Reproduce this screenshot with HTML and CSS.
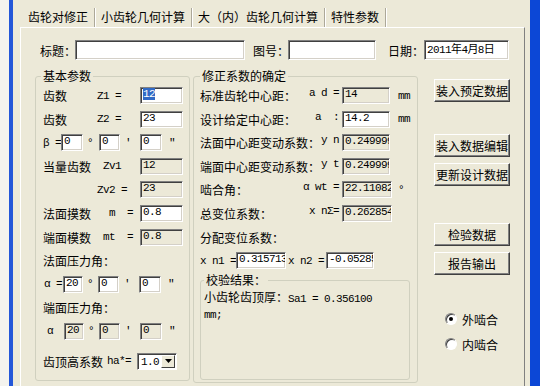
FILE: index.html
```html
<!DOCTYPE html>
<html lang="zh-CN">
<head>
    <meta charset="UTF-8">
    <title>齿轮对修正</title>
    <link rel="stylesheet" href="styles.css">
</head>
<body>
    <div class="window">
        <div class="tabs">
            <span class="tab active">齿轮对修正</span>
            <span class="tab">小齿轮几何计算</span>
            <span class="tab">大（内）齿轮几何计算</span>
            <span class="tab">特性参数</span>
        </div>

        <div class="panel">
            <div class="head">
                <span class="lbl-title">标题：</span><span class="edit big e-title"></span>
                <span class="lbl-no">图号：</span><span class="edit big e-no"></span>
                <span class="lbl-date">日期：</span><span class="edit big e-date">2011年4月8日</span>
            </div>

            <div class="main">
                <fieldset class="group basic">
                    <legend>基本参数</legend>
                    <div class="rows">
                        <div class="row"><span class="c1">齿数</span><span class="c2 en">Z1 =</span><span class="edit w43"><span class="sel">12</span></span></div>
                        <div class="row"><span class="c1">齿数</span><span class="c2 en">Z2 =</span><span class="edit w43">23</span></div>
                        <div class="row">
                            <span class="en pre-b">β =</span><span class="edit w22">0</span>
                            <span class="mark m-deg en">°</span><span class="edit w21">0</span>
                            <span class="mark m-min en">′</span><span class="edit w22">0</span>
                            <span class="mark m-sec en">″</span>
                        </div>
                        <div class="row"><span class="c1">当量齿数</span><span class="c2 en"> Zv1</span><span class="edit ro w43">12</span></div>
                        <div class="row"><span class="c1"></span><span class="c2 en">Zv2 =</span><span class="edit ro w43">23</span></div>
                        <div class="row"><span class="c1">法面摸数</span><span class="c2 en">  m  =</span><span class="edit w43">0.8</span></div>
                        <div class="row"><span class="c1">端面模数</span><span class="c2 en"> mt  =</span><span class="edit ro w43">0.8</span></div>
                        <div class="row">法面压力角：</div>
                        <div class="row">
                            <span class="en pre-a">α =</span><span class="edit w20">20</span>
                            <span class="mark m-deg2 en">°</span><span class="edit w21">0</span>
                            <span class="mark m-min en">′</span><span class="edit w22">0</span>
                            <span class="mark m-sec en">″</span>
                        </div>
                        <div class="row">端面压力角：</div>
                        <div class="row">
                            <span class="en pre-a2">α</span><span class="edit ro w20">20</span>
                            <span class="mark m-deg2 en">°</span><span class="edit ro w21">0</span>
                            <span class="mark m-min en">′</span><span class="edit ro w22">0</span>
                            <span class="mark m-sec en">″</span>
                        </div>
                        <div class="row last">
                            <span>齿顶高系数</span><span class="en ha">ha*=</span>
                            <span class="combo"><span class="combo-val">1.0</span><span class="drop"><svg width="7" height="4" viewBox="0 0 7 4"><polygon points="0,0 7,0 3.5,4" fill="#000"/></svg></span></span>
                        </div>
                    </div>
                </fieldset>

                <fieldset class="group fix">
                    <legend>修正系数的确定</legend>
                    <div class="rows">
                        <div class="row"><span class="rl"><span>标准齿轮中心距：</span><span class="en">a d =</span></span><span class="edit ro w48">14</span><span class="unit en">mm</span></div>
                        <div class="row"><span class="rl"><span>设计给定中心距：</span><span class="en">a  :</span></span><span class="edit w48">14.2</span><span class="unit en">mm</span></div>
                        <div class="row"><span class="rl"><span>法面中心距变动系数：</span><span class="en">y n</span></span><span class="edit ro w48">0.249999</span></div>
                        <div class="row"><span class="rl"><span>端面中心距变动系数：</span><span class="en">y t</span></span><span class="edit ro w48">0.249999</span></div>
                        <div class="row"><span class="rl"><span>啮合角：</span><span class="en">α wt =</span></span><span class="edit ro w50">22.11082</span><span class="unit deg en">°</span></div>
                        <div class="row"><span class="rl"><span>总变位系数：</span><span class="en">x nΣ=</span></span><span class="edit ro w50">0.262854</span></div>
                        <div class="row">分配变位系数：</div>
                        <div class="row">
                            <span class="en">x n1 =</span><span class="edit w50">0.315713</span>
                            <span class="en xn2">x n2 =</span><span class="edit w48 xn2-edit">-0.05285</span>
                        </div>
                    </div>

                    <fieldset class="group check">
                        <legend>校验结果：</legend>
                        <div class="result">小齿轮齿顶厚：<span class="en">Sa1 = 0.356100</span><br><span class="en">mm;</span></div>
                    </fieldset>
                </fieldset>

                <div class="side">
                    <span class="btn">装入预定数据</span>
                    <span class="btn gap-l">装入数据编辑</span>
                    <span class="btn gap-s">更新设计数据</span>
                    <span class="btn gap-xl">检验数据</span>
                    <span class="btn gap-s">报告输出</span>

                    <label class="radio-row first"><span class="radio on"></span>外啮合</label>
                    <label class="radio-row"><span class="radio"></span>内啮合</label>
                </div>
            </div>
        </div>
    </div>
</body>
</html>
```

FILE: styles.css
```css
* { margin: 0; padding: 0; box-sizing: border-box; }
body { background: #F4F3EE; color: #000; font: 12px "Noto Sans CJK SC", sans-serif; width: 540px; height: 386px; overflow: hidden; }

.window { margin-left: 9px; height: 386px; border-left: 4px solid #2457D8; border-right: 10px solid #0C47D6; background: #ECE9D8; }

/* tab strip */
.tabs { display: flex; height: 27px; padding: 8px 0 0 9px; }
.tab { height: 19px; line-height: 17px; padding: 0 6px; white-space: nowrap; border-right: 1px solid #ACA899; box-shadow: 1px 0 0 #fff; }

.panel { margin: 0 5px 0 7px; height: 359px; border-top: 1px solid #fff; border-left: 1px solid #fff; border-right: 1px solid #808080; }

/* edit boxes */
.edit { display: block; height: 17px; line-height: 15px; padding-left: 2px; background: #fff; border: 1px solid; border-color: #808080 #fff #fff #808080; box-shadow: inset 1px 1px 0 #404040, inset -1px -1px 0 #D4D0C8; font: 11px "Liberation Mono", "Noto Sans CJK SC", monospace; letter-spacing: -0.6px; white-space: nowrap; overflow: hidden; flex-shrink: 0; }
.edit.ro { background: #ECE9D8; }
.edit.big { height: 20px; line-height: 18px; }
.sel { background: #316AC5; color: #fff; }
.w20 { width: 20px; } .w21 { width: 21px; } .w22 { width: 22px; }
.w43 { width: 43px; } .w48 { width: 48px; } .w50 { width: 50px; }

.en { font-family: "Liberation Mono", monospace; font-size: 11px; letter-spacing: -0.6px; white-space: pre; }

/* title row */
.head { display: flex; align-items: center; height: 20px; margin: 12px 0 0 19px; white-space: nowrap; }
.lbl-title { width: 35px; flex-shrink: 0; }
.e-title { width: 170px; }
.lbl-no { width: 35px; margin-left: 8px; flex-shrink: 0; }
.e-no { width: 88px; }
.lbl-date { width: 36px; margin-left: 12px; flex-shrink: 0; }
.e-date { width: 85px; }

/* group boxes */
.main { display: flex; align-items: flex-start; margin: 9px 0 0 14px; }
.group { border: 1px solid #D0D0BF; border-radius: 3px; padding: 4px 0 0 7px; }
.group legend { padding: 0 2px; line-height: 14px; }
.basic { width: 155px; height: 312px; }
.basic legend { margin-left: -2px; }
.fix { width: 225px; height: 314px; margin-left: 3px; padding-left: 6px; }

.rows { display: flex; flex-direction: column; gap: 6.6px; }
.row { display: flex; align-items: center; height: 17px; white-space: nowrap; }
.row.last { margin-top: 6px; }
.c1 { width: 54px; }
.c2 { width: 43px; }

.pre-b { width: 18px; }
.pre-a { width: 20px; padding-left: 1px; }
.pre-a2 { width: 21px; padding-left: 4px; }
.mark { flex-shrink: 0; }
.m-deg { width: 16px; padding-left: 4px; }
.m-deg2 { width: 15px; padding-left: 4px; }
.m-min { width: 20px; padding-left: 5px; }
.m-sec { padding-left: 7px; }

.ha { margin-left: 4px; width: 30px; }
.combo { display: flex; width: 40px; height: 17px; background: #fff; border: 1px solid; border-color: #808080 #fff #fff #808080; box-shadow: inset 1px 1px 0 #404040; }
.combo-val { flex: 1; padding: 1px 0 0 3px; font: 11px "Liberation Mono", monospace; letter-spacing: -0.6px; line-height: 14px; }
.drop { width: 14px; height: 13px; margin: 1px 1px 0 0; display: flex; align-items: center; justify-content: center; background: #ECE9D8; border: 1px solid; border-color: #fff #404040 #404040 #fff; }

.rl { width: 142px; display: flex; justify-content: space-between; padding-right: 3px; }
.unit { margin-left: 8px; }
.unit.deg { margin-left: 6px; }
.xn2 { margin-left: 2px; }
.xn2-edit { margin-left: 2px; }

.check { width: 210px; height: 107px; margin-top: 4px; padding: 3px 0 0 3px; }
.result { line-height: 13px; }
.result .en { line-height: 13px; }

/* buttons and radios */
.side { display: flex; flex-direction: column; width: 76px; margin-left: 16px; padding-top: 10px; }
.btn { height: 23px; line-height: 21px; text-align: center; border: 1px solid; border-color: #fff #404040 #404040 #fff; box-shadow: inset -1px -1px 0 #808080; }
.gap-s { margin-top: 6px; }
.gap-l { margin-top: 32px; }
.gap-xl { margin-top: 37px; }

.radio-row { display: flex; align-items: center; gap: 5px; height: 16px; padding-left: 11px; margin-top: 9px; }
.radio-row.first { margin-top: 36px; }
.radio { position: relative; width: 12px; height: 12px; border-radius: 50%; background: #fff; border: 1px solid; border-color: #808080 #fff #fff #808080; box-shadow: inset 1px 1px 0 #404040; }
.radio.on::after { content: ''; position: absolute; left: 3px; top: 3px; width: 4px; height: 4px; border-radius: 50%; background: #000; }
```
